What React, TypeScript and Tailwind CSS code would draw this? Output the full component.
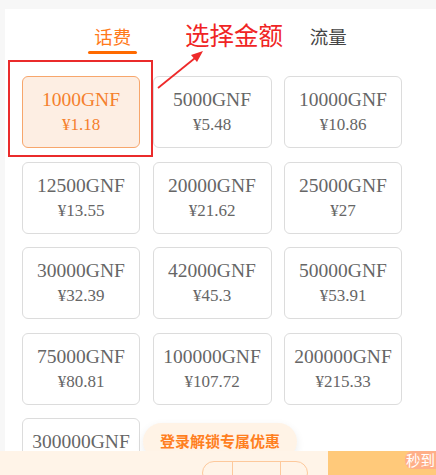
import React from 'react';

const plans = [
  { amount: '1000GNF', price: '¥1.18' },
  { amount: '5000GNF', price: '¥5.48' },
  { amount: '10000GNF', price: '¥10.86' },
  { amount: '12500GNF', price: '¥13.55' },
  { amount: '20000GNF', price: '¥21.62' },
  { amount: '25000GNF', price: '¥27' },
  { amount: '30000GNF', price: '¥32.39' },
  { amount: '42000GNF', price: '¥45.3' },
  { amount: '50000GNF', price: '¥53.91' },
  { amount: '75000GNF', price: '¥80.81' },
  { amount: '100000GNF', price: '¥107.72' },
  { amount: '200000GNF', price: '¥215.33' },
  { amount: '300000GNF', price: '¥322.16' },
];

const cjk = "font-['Noto_Sans_CJK_SC',sans-serif]";

export default function App() {
  const [selected, setSelected] = React.useState(0);

  return (
    <div className="relative w-[436px] h-[475px] overflow-hidden bg-[#f7f7f7]">
      <div className="ml-[5px] mt-[9px] h-full bg-white">
        {/* Tabs */}
        <div className={`flex h-[48px] ${cjk}`}>
          <div className="flex-1 flex flex-col items-center pt-[16px]">
            <span className="text-[18.5px] leading-[22px] text-[#ff7a1a]">话费</span>
            <span className="mt-[4px] w-[49px] h-[3px] rounded-full bg-[#ff6a00]" />
          </div>
          <div className="flex-1 flex flex-col items-center pt-[16px]">
            <span className="text-[18.5px] leading-[22px] text-[#444]">流量</span>
          </div>
        </div>

        {/* Amount grid */}
        <div className="grid grid-cols-[118px_119px_118px] gap-x-[12.5px] gap-y-[13.5px] pl-[17px] pt-[19px] font-['Liberation_Serif',serif]">
          {plans.map((p, i) => (
            <button
              key={p.amount}
              onClick={() => setSelected(i)}
              className={`h-[72px] rounded-[6px] border flex flex-col items-center justify-center ${
                selected === i
                  ? 'bg-[#fdeee3] border-[#f7a66c] text-[#f5802c]'
                  : 'bg-white border-[#dcdcdc] text-[#666]'
              }`}
            >
              <span className="text-[19.5px] leading-[26px]">{p.amount}</span>
              <span className="text-[17px] leading-[24px]">{p.price}</span>
            </button>
          ))}
        </div>
      </div>

      {/* Annotation: red box, arrow and label */}
      <div className="absolute left-[8px] top-[60px] w-[145px] h-[97px] border-2 border-[#ea2b2b] pointer-events-none" />
      <svg className="absolute left-[150px] top-[45px]" width="60" height="50" viewBox="0 0 60 50">
        <line x1="8" y1="43" x2="50" y2="9" stroke="#ee2a2a" strokeWidth="1.8" />
        <path d="M53 6 L41 10 L47 17 Z" fill="#ee2a2a" />
      </svg>
      <div className={`absolute left-[185px] top-[19px] text-[24.5px] leading-[32px] text-[#f02424] ${cjk}`}>
        选择金额
      </div>

      {/* Login promo pill */}
      <div
        className={`absolute left-[143px] top-[423px] w-[154px] h-[37px] rounded-full bg-[#fff3e6] shadow-[0_3px_8px_rgba(0,0,0,0.08)] flex items-center justify-center text-[15px] font-bold text-[#ff7f1f] ${cjk}`}
      >
        登录解锁专属优惠
      </div>

      {/* Bottom bar */}
      <div className="absolute left-0 right-0 top-[451px] h-[24px] flex">
        <div className="relative w-[328px] bg-[#fff4e8]">
          <div className="absolute left-[202px] top-[10px] w-[106px] h-[24px] rounded-full border border-[#fdc99c] flex">
            <span className="w-[30px] border-r border-[#fdc99c]" />
            <span className="w-[48px] border-r border-[#fdc99c]" />
          </div>
        </div>
        <div className="relative flex-1 bg-[#ffc97a]">
          <span
            className={`absolute left-[77px] top-0 w-[31px] h-[18px] pl-[1px] rounded-l-[8px] bg-[#ffaf88] text-[14.5px] leading-[18px] text-white whitespace-nowrap ${cjk}`}
          >
            秒到
          </span>
        </div>
      </div>
    </div>
  );
}
